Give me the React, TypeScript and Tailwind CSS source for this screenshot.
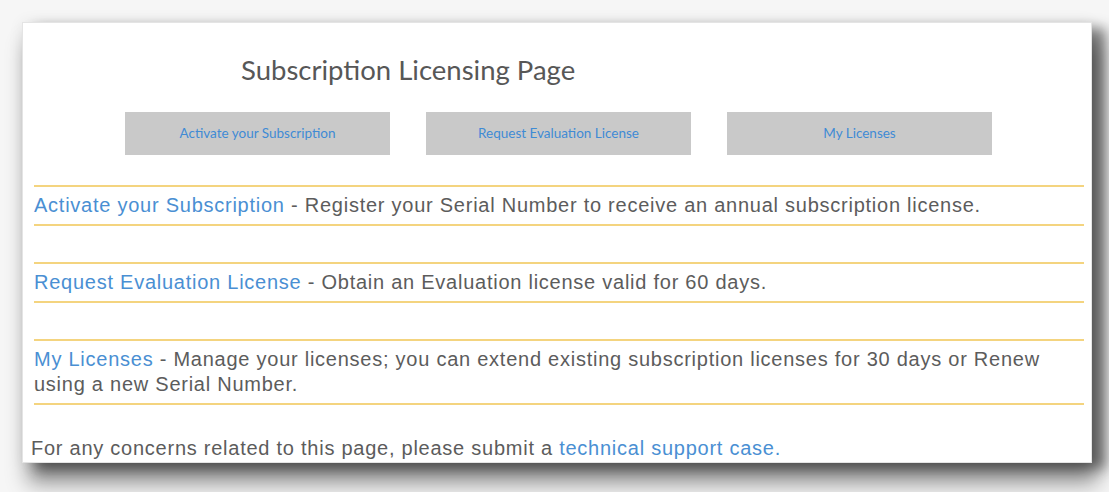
import React from 'react';

const BUTTONS = ['Activate your Subscription', 'Request Evaluation License', 'My Licenses'];

const ROWS = [
  { link: 'Activate your Subscription', text: 'Register your Serial Number to receive an annual subscription license.' },
  { link: 'Request Evaluation License', text: 'Obtain an Evaluation license valid for 60 days.' },
  { link: 'My Licenses', text: 'Manage your licenses; you can extend existing subscription licenses for 30 days or Renew using a new Serial Number.' },
];

export default function App() {
  return (
    <div className="w-[1109px] h-[492px] overflow-hidden bg-[#f6f6f6] pl-[22px] pt-[22px]">
      {/* ── Card ── */}
      <div className="w-[1070px] h-[441px] bg-white border border-[#e4e4e4] flex flex-col shadow-[14px_6px_12px_rgba(0,0,0,0.45),6px_20px_20px_rgba(0,0,0,0.42),0_0_14px_rgba(0,0,0,0.07)]">

        {/* Title */}
        <h1 className="pl-[218px] pt-[29px] text-[27.5px] leading-[36px] text-[#575757] font-['Lato',sans-serif]">
          Subscription Licensing Page
        </h1>

        {/* Buttons */}
        <div className="flex gap-[36px] pl-[102px] mt-[24px]">
          {BUTTONS.map(b => (
            <button key={b}
              className="w-[265px] h-[43px] bg-[#c9c9c9] text-[#3f8bd5] text-[13.5px] font-['Lato',sans-serif] flex items-center justify-center">
              {b}
            </button>
          ))}
        </div>

        {/* Sections */}
        <div className="pl-[11px] pr-[7px] mt-[30px] flex flex-col gap-[36px] font-['Liberation_Sans',Arial,sans-serif] text-[20px] tracking-[0.75px] leading-[25px] text-[#5c5c5c]">
          {ROWS.map(r => (
            <div key={r.link} className="border-y-2 border-[#f4d47f] py-[6px]">
              <a className="text-[#4a8fd3]">{r.link}</a> - {r.text}
            </div>
          ))}
        </div>

        {/* Footer */}
        <p className="pl-[8px] mt-[31px] font-['Liberation_Sans',Arial,sans-serif] text-[20px] tracking-[0.75px] leading-[25px] text-[#5c5c5c]">
          For any concerns related to this page, please submit a <a className="text-[#4a8fd3]">technical support case.</a>
        </p>
      </div>
    </div>
  );
}
